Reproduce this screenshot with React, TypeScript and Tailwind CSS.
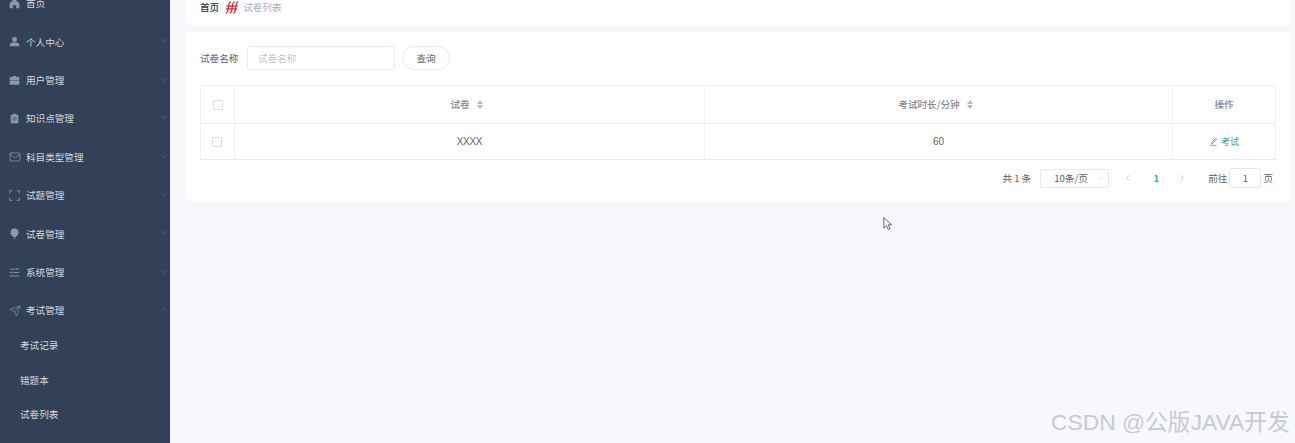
import React from "react";
import { ChevronDown, ChevronUp, ChevronLeft, ChevronRight, Mail, Send } from "lucide-react";

const cjk = "font-['Noto_Sans_CJK_SC','Liberation_Sans',sans-serif]";

const Home = () => (
  <svg viewBox="0 0 16 16" className="w-[11px] h-[11px]" fill="#8f99a6"><path d="M8 1 1 7.500V15h4.500v-4.500h5V15H15V7.500z" /></svg>
);
const Person = () => (
  <svg viewBox="0 0 16 16" className="w-[11px] h-[11px]" fill="#8f99a6"><circle cx="8" cy="5" r="3.600" /><path d="M1 15v-2c0-2.400 2.500-4 7-4s7 1.600 7 4v2z" /></svg>
);
const Case = () => (
  <svg viewBox="0 0 16 16" className="w-[11px] h-[11px]" fill="#8f99a6"><path d="M5.500 3V1.500h5V3h4.500v4.500H1V3zM1 8.500h14V14H1z" /></svg>
);
const Clip = () => (
  <svg viewBox="0 0 16 16" className="w-[11px] h-[11px]" fill="#8f99a6"><path d="M5 1h6v2h2.500v12h-11V3H5zM5 6.500v1h6v-1zM5 9.500v1h6v-1z" fillRule="evenodd" /></svg>
);
const Scan = () => (
  <svg viewBox="0 0 16 16" className="w-[11px] h-[11px]" fill="none" stroke="#8f99a6" strokeWidth="1.200"><path d="M1 5V1h4M11 1h4v4M15 11v4h-4M5 15H1v-4" /></svg>
);
const Bulb = () => (
  <svg viewBox="0 0 16 16" className="w-[11px] h-[11px]" fill="#8f99a6"><path d="M8 .5a6 6 0 0 0-3.500 10.800L6 13h4l1.500-1.700A6 6 0 0 0 8 .5zM6.500 14h3v1.500h-3z" /></svg>
);
const Lines = () => (
  <svg viewBox="0 0 16 16" className="w-[11px] h-[11px]" fill="none" stroke="#8f99a6" strokeWidth="1.300"><path d="M1 3h8M12 3h3M1 8h3M7 8h8M1 13h9M13 13h2M10.500 1.500v3M5.500 6.500v3M11.500 11.500v3" /></svg>
);
const Pen = () => (
  <svg viewBox="0 0 12 12" className="w-[9px] h-[9px] mr-[3px]" fill="none" stroke="#2aa889" strokeWidth="1"><path d="M9 1.500 4 7l-.8 2L5 8.300 10.200 3zM1 11h9" /></svg>
);

const menu: [string, React.ReactNode][] = [
  ["首页", <Home />],
  ["个人中心", <Person />],
  ["用户管理", <Case />],
  ["知识点管理", <Clip />],
  ["科目类型管理", <Mail size={12} color="#8f99a6" strokeWidth={1.500} />],
  ["试题管理", <Scan />],
  ["试卷管理", <Bulb />],
  ["系统管理", <Lines />],
  ["考试管理", <Send size={12} color="#8f99a6" strokeWidth={1.300} />],
];

const Sort = () => (
  <span className="inline-flex flex-col gap-[1px] ml-[7px]">
    <span className="w-0 h-0 border-x-[3.500px] border-x-transparent border-b-[4px] border-b-[#b4b9c2]" />
    <span className="w-0 h-0 border-x-[3.500px] border-x-transparent border-t-[4px] border-t-[#b4b9c2]" />
  </span>
);

const Check = () => <span className="block w-[10px] h-[10px] border border-[#dcdfe6] rounded-[1px] bg-white" />;

export default function App() {
  return (
    <div className={`relative flex w-[1295px] h-[443px] overflow-hidden bg-[#f6f8fc] ${cjk}`}>
      <aside className="w-[170px] shrink-0 bg-[#324157] text-[#d5d9df] text-[9.6px]">
        <div className="-mt-[15.700px]">
          {menu.map(([label, icon], i) => (
            <div key={label} className="flex items-center h-[38.4px] pl-[9px]">
              <span className="w-[17px] flex items-center">{icon}</span>
              <span className="flex-1">{label}</span>
              {i === 0 ? null : i === 8 ? (
                <ChevronUp size={11} color="#77828f" strokeWidth={1} className="mr-[1px] -mt-[2px]" />
              ) : (
                <ChevronDown size={11} color="#77828f" strokeWidth={1} className="mr-[1px] -mt-[2px]" />
              )}
            </div>
          ))}
          <div className="h-[34.400px] -mt-[1.500px] flex items-center pl-[20px]">考试记录</div>
          <div className="h-[34.400px] flex items-center pl-[20px]">错题本</div>
          <div className="h-[34.400px] flex items-center pl-[20px]">试卷列表</div>
        </div>
      </aside>

      <main className="flex-1 pl-[16px] pr-[6px]">
        <div className="h-[25px] bg-white rounded-b-[4px] flex items-center pl-[14px] text-[9.6px] pb-[10px]">
          <span className="text-[#303133] font-medium">首页</span>
          <svg viewBox="0 0 14 14" className="w-[13px] h-[13px] ml-[6px] mr-[5px]" fill="none" stroke="#e8232a" strokeWidth="1.300">
            <path d="M1 13c1.500 0 1.800-1 2.200-3.500l1-6C4.500 1.800 5 1 6.500 1M5 13c1.500 0 1.800-1 2.200-3.500l1-6C8.500 1.800 9 1 10.500 1M9 13c1.500 0 1.800-1 2.200-3.500l1-6C12.500 1.800 13 1 14 1M1.500 5.500h12M1 8.500h12" />
          </svg>
          <span className="text-[#a8afbd]">试卷列表</span>
        </div>

        <section className="mt-[7px] h-[169px] bg-white px-[14px] pt-[14px]">
          <div className="flex items-center h-[24px] text-[9.6px]">
            <span className="w-[47px] text-[#606266]">试卷名称</span>
            <div className="w-[148px] h-[24px] border border-[#e6e9f0] rounded-[2px] flex items-center pl-[10px] text-[#c0c4cc]">试卷名称</div>
            <div className="ml-[7px] w-[48px] h-[24px] border border-[#e6e9f0] rounded-full flex items-center justify-center text-[#606266]">查询</div>
          </div>

          <div className="mt-[15px] w-[1076px] border border-[#eef0f5] border-b-[#e8ebf0] text-[9.6px] text-[#606266]">
            <div className="grid grid-cols-[34px_470px_468px_1fr] h-[38px] border-b border-[#eef0f5] text-[#85898f] font-medium">
              <div className="flex items-center justify-center border-r border-[#eef0f5]"><Check /></div>
              <div className="flex items-center justify-center border-r border-[#f3f4f8] pr-[6px]">试卷<Sort /></div>
              <div className="flex items-center justify-center border-r border-[#eef0f5] pr-[6px]">考试时长/分钟<Sort /></div>
              <div className="flex items-center justify-center">操作</div>
            </div>
            <div className="grid grid-cols-[34px_470px_468px_1fr] h-[35px]">
              <div className="flex items-center justify-center border-r border-[#eef0f5] pr-[2px]"><Check /></div>
              <div className="flex items-center justify-center border-r border-[#f3f4f8] text-[10px] tracking-[-0.3px] font-['Liberation_Sans',sans-serif]">XXXX</div>
              <div className="flex items-center justify-center border-r border-[#eef0f5] text-[10px] font-['Liberation_Sans',sans-serif]">60</div>
              <div className="flex items-center justify-center text-[#2aa889] text-[9px]">
                <Pen />考试
              </div>
            </div>
          </div>

          <div className="flex items-center justify-end h-[18px] mt-[9px] w-[1076px] text-[9.6px] text-[#606266]">
            <span className="mr-[9px]">共 1 条</span>
            <div className="w-[69px] h-[19px] border border-[#e4e7ed] rounded-[2px] flex items-center pl-[13px] pr-[2px]">
              <span className="flex-1">10条/页</span>
              <ChevronDown size={10} color="#c0c4cc" strokeWidth={1.200} />
            </div>
            <ChevronLeft size={10} color="#b4b9c2" className="ml-[14px]" />
            <span className="ml-[20px] mr-[18px] w-[6px] text-center text-[#1fb89c] font-bold">1</span>
            <ChevronRight size={10} color="#b4b9c2" />
            <span className="ml-[21px]">前往</span>
            <div className="ml-[2px] w-[32px] h-[20px] border border-[#e4e7ed] rounded-[3px] flex items-center justify-center">1</div>
            <span className="ml-[2px] mr-[3px]">页</span>
          </div>
        </section>
      </main>

      <svg viewBox="0 0 12 19" className="absolute left-[883px] top-[217px] w-[9px] h-[14px]" fill="#fff" stroke="#555" strokeWidth="1.200">
        <path d="M1 1v14l3.500-3.500L7 17l2.500-1-2.500-5.500h4.500z" />
      </svg>

      <div className="absolute left-[1051px] top-[407px] text-[22.800px] leading-[30px] text-[#c8cacd] whitespace-nowrap font-['Liberation_Sans','Noto_Sans_CJK_SC',sans-serif]">
        CSDN @公版JAVA开发
      </div>
    </div>
  );
}
